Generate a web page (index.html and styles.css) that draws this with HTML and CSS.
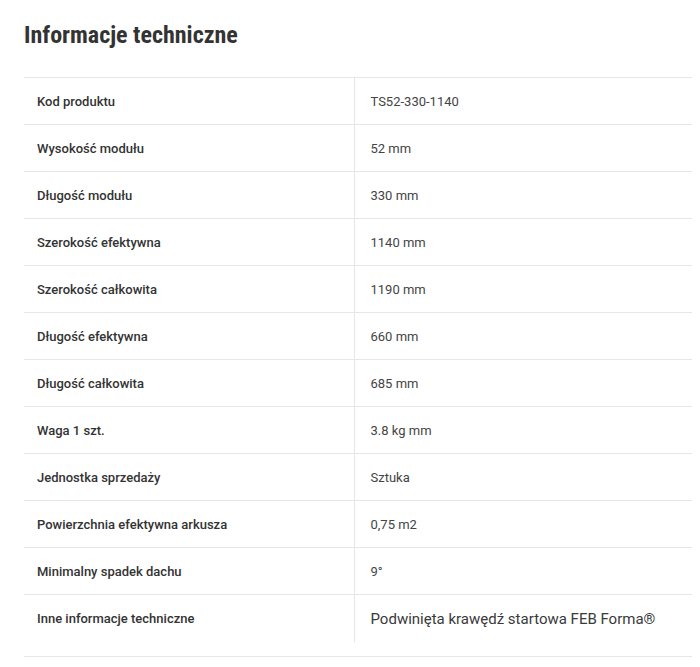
FILE: index.html
```html
<!DOCTYPE html>
<html lang="pl">
<head>
<meta charset="utf-8">
<link rel="stylesheet" href="styles.css">
</head>
<body>
<section class="tech">
  <h2 class="tech-title">Informacje techniczne</h2>
  <table class="tech-table">
    <tr><td class="label">Kod produktu</td><td class="value">TS52-330-1140</td></tr>
    <tr><td class="label">Wysokość modułu</td><td class="value">52 mm</td></tr>
    <tr><td class="label">Długość modułu</td><td class="value">330 mm</td></tr>
    <tr><td class="label">Szerokość efektywna</td><td class="value">1140 mm</td></tr>
    <tr><td class="label">Szerokość całkowita</td><td class="value">1190 mm</td></tr>
    <tr><td class="label">Długość efektywna</td><td class="value">660 mm</td></tr>
    <tr><td class="label">Długość całkowita</td><td class="value">685 mm</td></tr>
    <tr><td class="label">Waga 1 szt.</td><td class="value">3.8 kg mm</td></tr>
    <tr><td class="label">Jednostka sprzedaży</td><td class="value">Sztuka</td></tr>
    <tr><td class="label">Powierzchnia efektywna arkusza</td><td class="value">0,75 m2</td></tr>
    <tr><td class="label">Minimalny spadek dachu</td><td class="value">9°</td></tr>
    <tr class="last"><td class="label">Inne informacje techniczne</td><td class="value big">Podwinięta krawędź startowa FEB Forma®</td></tr>
  </table>
  <div class="tech-rule"></div>
</section>
</body>
</html>
```
FILE: styles.css
```css
html, body {
  margin: 0;
  padding: 0;
  background: #fff;
}
body {
  font-family: Roboto, "Liberation Sans", sans-serif;
  color: #333;
}
.tech {
  padding: 0 8px 0 24px;
}
.tech-title {
  margin: 0;
  padding-top: 21px;
  height: 77px;
  box-sizing: border-box;
  font-size: 24px;
  line-height: 28px;
  font-weight: 700;
  color: #333;
  font-stretch: condensed;
  letter-spacing: 0;
}
.tech-table {
  width: 100%;
  border-collapse: collapse;
  border-top: 1px solid #e6e6e6;
}
.tech-table td {
  height: 46px;
  padding: 0;
  border-bottom: 1px solid #e6e6e6;
  font-size: 13px;
  vertical-align: middle;
}
.tech-table .label {
  width: 330px;
  padding-left: 13px;
  box-sizing: border-box;
  font-weight: 500;
  color: #333;
  border-right: 1px solid #e6e6e6;
}
.tech-table .value {
  padding-left: 16px;
  color: #444;
}
.tech-table .last td {
  height: 47px;
  border-bottom: none;
}
.tech-table .value.big {
  font-size: 15px;
  color: #3a3a3a;
}
.tech-rule {
  margin-top: 14px;
  border-top: 1px solid #e6e6e6;
}
```
